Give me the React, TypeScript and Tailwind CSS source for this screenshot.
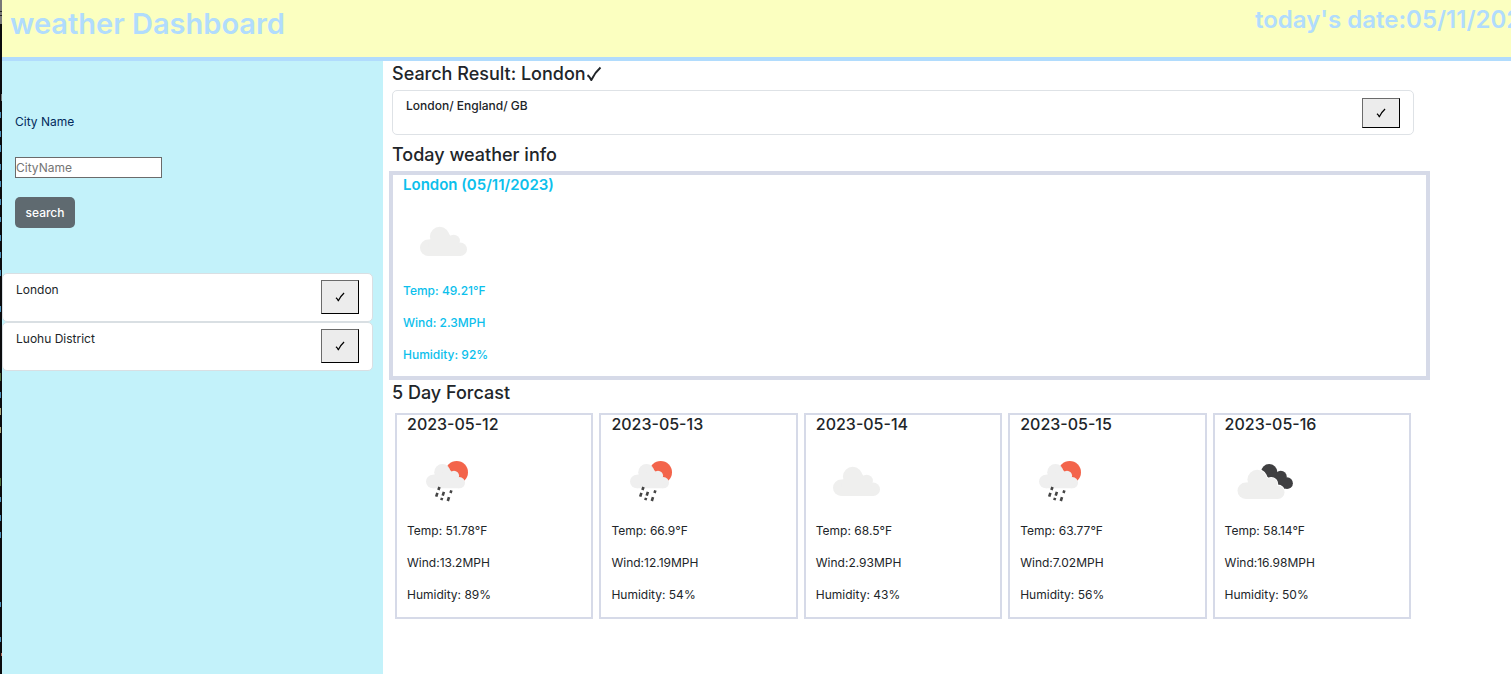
import { useState } from "react";

type IconKind = "clouds" | "rain" | "broken";

const forecast: { date: string; icon: IconKind; temp: string; wind: string; humidity: string }[] = [
  { date: "2023-05-12", icon: "rain", temp: "51.78", wind: "13.2", humidity: "89" },
  { date: "2023-05-13", icon: "rain", temp: "66.9", wind: "12.19", humidity: "54" },
  { date: "2023-05-14", icon: "clouds", temp: "68.5", wind: "2.93", humidity: "43" },
  { date: "2023-05-15", icon: "rain", temp: "63.77", wind: "7.02", humidity: "56" },
  { date: "2023-05-16", icon: "broken", temp: "58.14", wind: "16.98", humidity: "50" },
];

const savedCities = ["London", "Luohu District"];

function CloudShape() {
  return (
    <>
      <circle cx="25.2" cy="45.8" r="8.2" />
      <circle cx="36.7" cy="34.6" r="9.8" />
      <circle cx="50.7" cy="39" r="6.2" />
      <circle cx="57.2" cy="47.2" r="6.8" />
      <path d="M25 38 L46 32 L55 42 L57.2 54 L25.2 54 Z" />
    </>
  );
}

function WeatherIcon({ kind }: { kind: IconKind }) {
  return (
    <svg viewBox="0 0 80 80" className="block size-20" aria-hidden="true">
      {kind === "clouds" && (
        <g fill="#efefee">
          <CloudShape />
        </g>
      )}
      {kind === "rain" && (
        <>
          <circle cx="49.7" cy="30.3" r="11.3" fill="#f3644b" />
          <g fill="#efefef" transform="translate(4.9 1.5) scale(.83)">
            <CloudShape />
          </g>
          <g stroke="#454545" strokeWidth="2.6">
            <path d="M31.4 48l1.1-3M29.2 54.6l1.2-3.8M35.7 53.6l1.2-3.8M43.5 51l.9-2.6M34.3 58.2l.8-2.4M40.8 59l1.2-3.8" />
          </g>
        </>
      )}
      {kind === "broken" && (
        <>
          <g fill="#3f3f41">
            <circle cx="44.2" cy="30.2" r="8.2" />
            <circle cx="55.8" cy="34.7" r="6" />
            <circle cx="62" cy="41.2" r="5.9" />
            <path d="M44 30 L56 31 L63 38 L60 47 L44 42 Z" />
          </g>
          <g transform="translate(-4.5 3)">
            <g fill="#fff" stroke="#fff" strokeWidth="1.6">
              <CloudShape />
            </g>
            <g fill="#efefee">
              <CloudShape />
            </g>
          </g>
        </>
      )}
    </svg>
  );
}

function CheckMark({ className }: { className: string }) {
  return (
    <svg viewBox="0 0 16 16" className={className} fill="none" stroke="currentColor" strokeWidth="2" strokeLinejoin="round" aria-hidden="true">
      <path d="M1.5 9.2 Q3.6 10.6 5.3 14 Q9 6.5 14.5 1.6" />
    </svg>
  );
}

function CheckButton({ label, size }: { label: string; size: string }) {
  return (
    <button
      type="button"
      aria-label={label}
      className={`${size} flex w-[38px] shrink-0 items-center justify-center border border-t-[#6b6b6b] border-r-black border-b-black border-l-[#6b6b6b] bg-[#ececec] text-black`}
    >
      <CheckMark className="size-[10px]" />
    </button>
  );
}

function EditorEdge() {
  return (
    <svg viewBox="0 0 2 674" preserveAspectRatio="none" className="w-[2px] shrink-0 self-stretch bg-[#0b0b0d]" aria-hidden="true">
      <path d="M0 0h2v24H0z" fill="#777" />
      <path d="M0 11h2v1H0zM0 15h2v1H0z" fill="#222" />
      <path d="M1 94h1v7H1z" fill="#777" />
      <path
        d="M0 112h1v6H0zM0 131h1v6H0zM0 145h1v7H0zM0 164h1v6H0zM0 181h1v6H0zM0 199h1v6H0zM0 217h1v5H0zM0 235h1v6H0zM0 252h1v6H0zM0 270h1v6H0zM0 306h1v6H0zM0 392h1v6H0zM0 497h1v5H0zM0 515h1v6H0zM0 532h1v6H0zM0 602h1v5H0zM0 637h1v5H0z"
        fill="#4b8fb8"
      />
      <path d="M0 373h1v8H0zM0 478h1v8H0z" fill="#4c6b3a" />
      <path d="M0 408h1v7H0zM0 427h1v6H0z" fill="#a9a67a" />
      <path d="M1 653h1v3H1z" fill="#b8705f" />
    </svg>
  );
}

export default function App() {
  const [city, setCity] = useState("");

  return (
    <div className="flex min-h-screen overflow-hidden bg-white font-[Inter,'Liberation_Sans',sans-serif] text-[12px] leading-[19px] text-[#212529]">
      <EditorEdge />
      <div className="flex min-w-0 flex-1 flex-col">
        <header className="flex h-[61px] justify-between border-b-4 border-[#b1dcfd] bg-[#fbffc0] pl-2 font-semibold text-[#b1dcfd]">
          <h1 className="pt-[5px] text-[29px] leading-[38px]">weather Dashboard</h1>
          <h2 className="w-64 overflow-hidden pt-1 text-[24px] leading-8 whitespace-nowrap">today's date:05/11/2023</h2>
        </header>

        <div className="flex flex-1">
          <aside className="w-[25.25%] shrink-0 bg-[#c3f2fa] pt-[51px]">
            <form className="flex flex-col items-start pl-[13px]" onSubmit={(e) => e.preventDefault()}>
              <label htmlFor="city" className="text-[#032b5c]">
                City Name
              </label>
              <input
                id="city"
                value={city}
                onChange={(e) => setCity(e.target.value)}
                placeholder="CityName"
                className="mt-[26px] h-[21px] w-[147px] border border-[#6b6b6b] bg-white placeholder:text-[#757575]"
              />
              <button type="submit" className="mt-[19px] h-[31px] w-[60px] rounded-[5px] bg-[#5f6a70] font-medium text-white">
                search
              </button>
            </form>
            <ul className="mt-[45px] mr-[10px]">
              {savedCities.map((name) => (
                <li
                  key={name}
                  className="flex h-[49px] items-start justify-between rounded-[5px] border border-[#d9dfe3] bg-white pt-[6px] pr-[13px] pl-[13px]"
                >
                  <span>{name}</span>
                  <CheckButton label={`Show ${name}`} size="h-[34px]" />
                </li>
              ))}
            </ul>
          </aside>

          <main className="min-w-0 flex-1 pr-[81px] pl-[6px]">
            <h3 className="ml-[3px] flex items-center pt-[1px] text-[18px] leading-[23px] font-medium">
              Search Result: London
              <CheckMark className="size-4" />
            </h3>
            <div className="mt-[5px] mr-4 ml-[3px] flex h-[45px] items-start justify-between rounded-[5px] border border-[#dee2e6] pr-[13px] pl-[13px]">
              <span className="pt-[5px] font-medium">London/ England/ GB</span>
              <div className="pt-[7px]">
                <CheckButton label="Select London/ England/ GB" size="h-[30px]" />
              </div>
            </div>

            <h3 className="mt-2 ml-[3px] text-[18px] leading-[23px] font-medium">Today weather info</h3>
            <section className="mt-[5px] border-4 border-[#d6dae8] pl-[10px] font-medium text-[#0cc0ec]">
              <h4 className="mb-2 text-[15px] leading-[19px] font-semibold">London (05/11/2023)</h4>
              <WeatherIcon kind="clouds" />
              <div className="-mt-px flex flex-col gap-[13px] pb-3">
                <p>Temp: 49.21°F</p>
                <p>Wind: 2.3MPH</p>
                <p>Humidity: 92%</p>
              </div>
            </section>

            <h3 className="mt-px ml-[3px] text-[18px] leading-[23px] font-medium">5 Day Forcast</h3>
            <section className="mt-[9px] mr-[19px] ml-[6px] grid grid-cols-5 gap-[6px]">
              {forecast.map((day) => (
                <article key={day.date} className="border-2 border-[#d6dae8] pl-[10px]">
                  <h4 className="mb-2 text-[16px] leading-[19px] font-medium">{day.date}</h4>
                  <WeatherIcon kind={day.icon} />
                  <div className="-mt-px flex flex-col gap-[13px] pb-[13px]">
                    <p>Temp: {day.temp}°F</p>
                    <p>Wind:{day.wind}MPH</p>
                    <p>Humidity: {day.humidity}%</p>
                  </div>
                </article>
              ))}
            </section>
          </main>
        </div>
      </div>
    </div>
  );
}
